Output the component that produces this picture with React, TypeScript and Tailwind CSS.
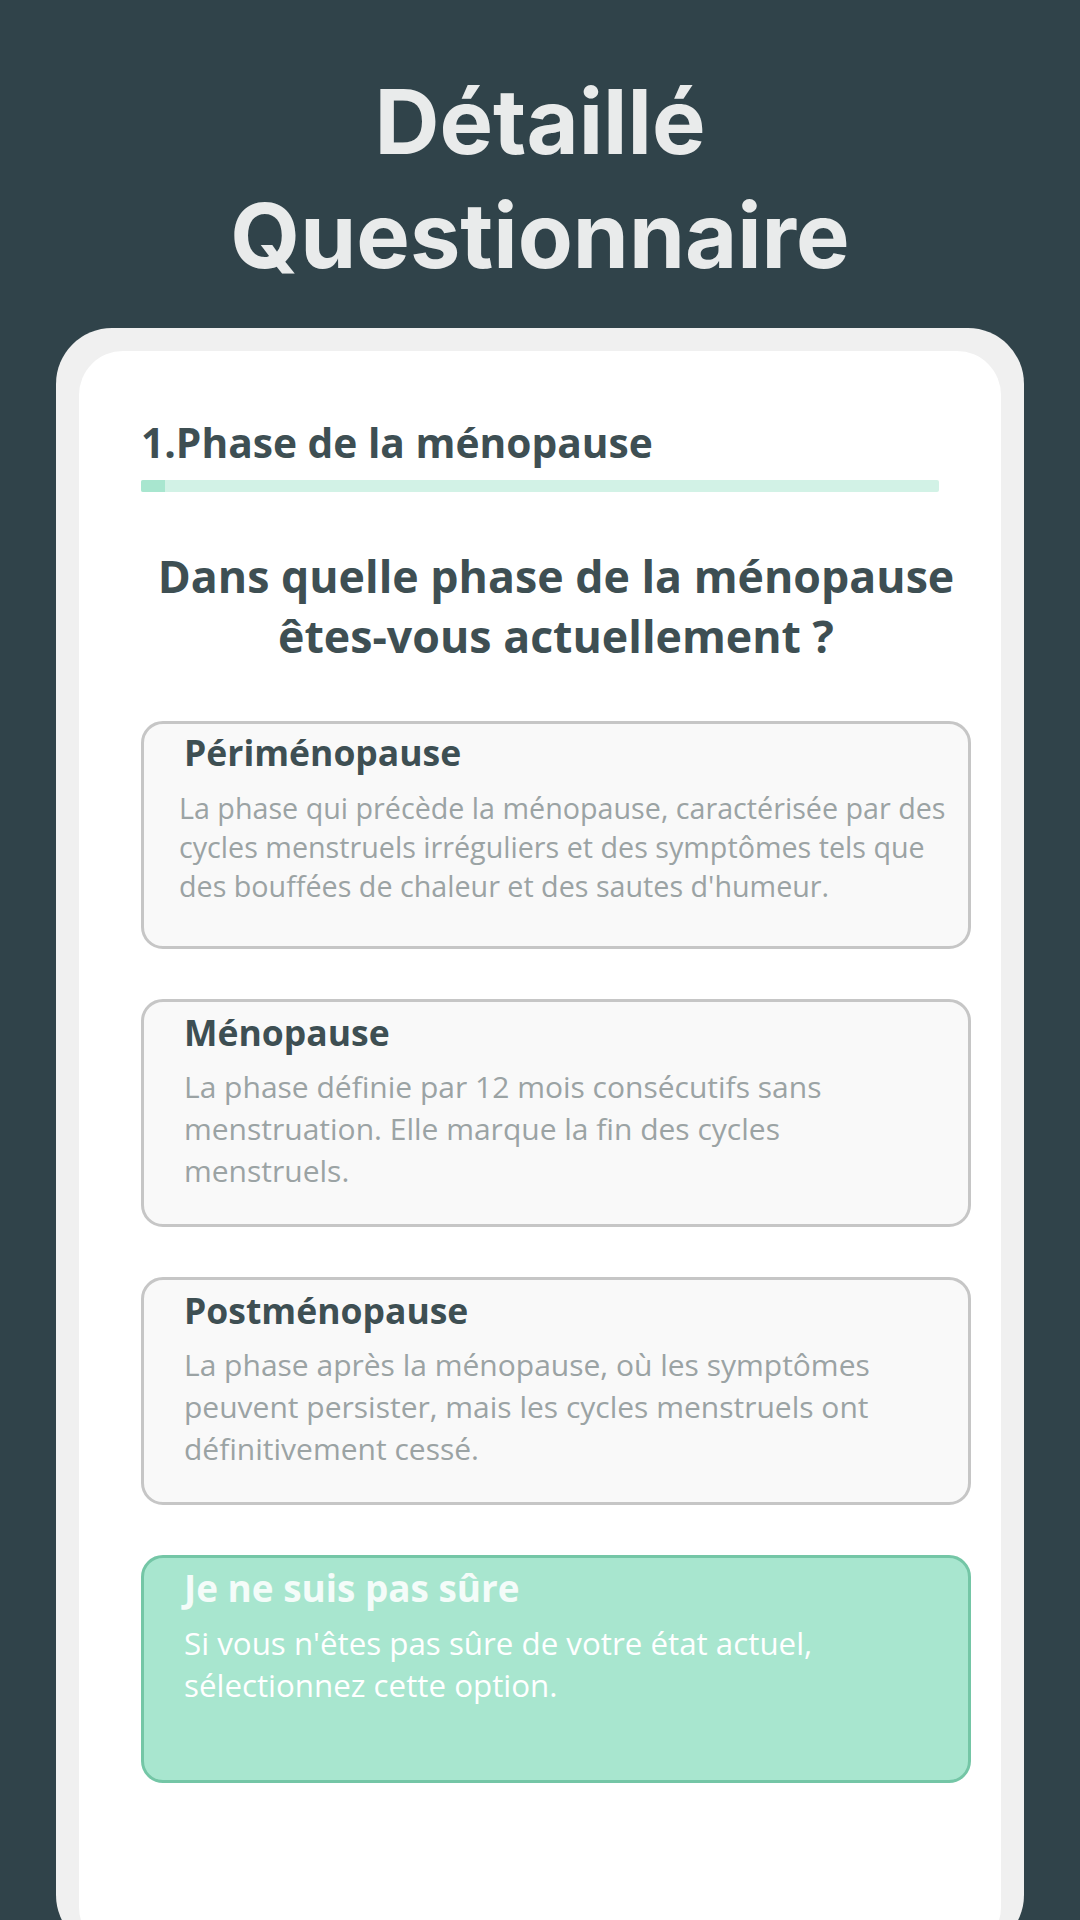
import { useState } from "react";

const options = [
  {
    id: "peri",
    title: "Périménopause",
    text: "La phase qui précède la ménopause, caractérisée par des cycles menstruels irréguliers et des symptômes tels que des bouffées de chaleur et des sautes d'humeur.",
    compact: true,
  },
  {
    id: "meno",
    title: "Ménopause",
    text: "La phase définie par 12 mois consécutifs sans menstruation. Elle marque la fin des cycles menstruels.",
  },
  {
    id: "post",
    title: "Postménopause",
    text: "La phase après la ménopause, où les symptômes peuvent persister, mais les cycles menstruels ont définitivement cessé.",
  },
  {
    id: "unsure",
    title: "Je ne suis pas sûre",
    text: "Si vous n'êtes pas sûre de votre état actuel, sélectionnez cette option.",
  },
];

export default function App() {
  const [selected, setSelected] = useState("unsure");

  return (
    <div className="flex h-[1920px] w-[1080px] flex-col items-center overflow-hidden bg-[#30434a]">
      <h1 className="pt-[65px] text-center font-['Inter',sans-serif] text-[90px] font-bold leading-[114px] text-[#e9ebeb]">
        Détaillé
        <br />
        Questionnaire
      </h1>

      <div className="mt-[35px] w-[968px] shrink-0 rounded-[56px] bg-[#f0f0f0] px-[23px] pt-[23px]">
        <div className="h-[1600px] rounded-[44px] bg-white pl-[62px] pr-[30px] pt-[64px] font-['Open_Sans',sans-serif]">
          <h2 className="text-[40.7px] font-bold leading-[54px] text-[#3e4f53]">
            1.Phase de la ménopause
          </h2>
          <div className="mt-[11px] h-[12px] w-[798px] overflow-hidden rounded-[2px] bg-[#d2f2e6]">
            <div className="h-full w-[24px] bg-[#a8e6cf]" />
          </div>

          <p className="mt-[54px] text-center text-[44.7px] font-bold leading-[60px] text-[#3e4f53]">
            Dans quelle phase de la ménopause
            <br />
            êtes-vous actuellement ?
          </p>

          <div className="mt-[55px] flex flex-col gap-[50px]">
            {options.map((opt) => {
              const active = selected === opt.id;
              return (
                <div
                  key={opt.id}
                  role="button"
                  onClick={() => setSelected(opt.id)}
                  className={`flex h-[228px] w-full cursor-pointer flex-col rounded-[22px] border-[3px] pl-[40px] ${
                    opt.compact ? "pr-[8px] pt-[4px]" : "pr-[30px] pt-[6px]"
                  } ${
                    active
                      ? "border-[#74c6a6] bg-[#a8e6cf]"
                      : "border-[#c6c6c6] bg-[#f9f9f9]"
                  }`}
                >
                  <div
                    className={`font-bold leading-[48px] ${
                      active
                        ? "text-[36.9px] text-[#f4fcf9]"
                        : "text-[35.5px] text-[#3e4f53]"
                    }`}
                  >
                    {opt.title}
                  </div>
                  <div
                    className={`${
                      opt.compact
                        ? "-ml-[5px] mt-[12px] text-[28.7px] leading-[39px]"
                        : active
                          ? "mt-[10px] text-[31.3px] leading-[42px]"
                          : "mt-[10px] text-[30px] leading-[42px]"
                    } ${active ? "text-[#ffffff]" : "text-[#9ba3a4]"}`}
                  >
                    {opt.text}
                  </div>
                </div>
              );
            })}
          </div>
        </div>
      </div>
    </div>
  );
}
